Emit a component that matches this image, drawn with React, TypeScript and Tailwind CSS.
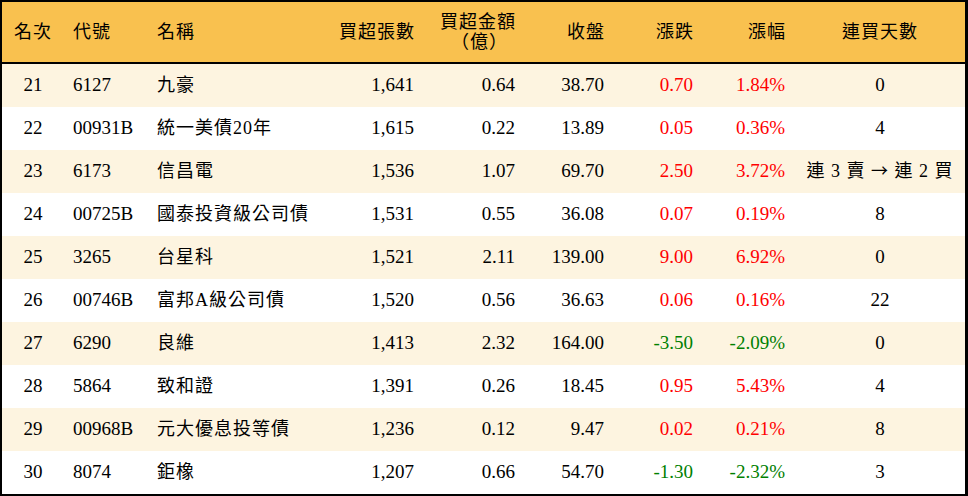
import React from 'react';

type Row = {
  rank: number;
  code: string;
  name: string;
  vol: string;
  amount: string;
  close: string;
  change: string;
  pct: string;
  days: React.ReactNode;
};

const streak = (
  <span className="text-[18px] tracking-[1px]">
    連 3 賣 <span className="font-['Noto_Sans_CJK_TC',sans-serif] text-[17px]">→</span> 連 2 買
  </span>
);

const rows: Row[] = [
  { rank: 21, code: '6127', name: '九豪', vol: '1,641', amount: '0.64', close: '38.70', change: '0.70', pct: '1.84%', days: '0' },
  { rank: 22, code: '00931B', name: '統一美債20年', vol: '1,615', amount: '0.22', close: '13.89', change: '0.05', pct: '0.36%', days: '4' },
  { rank: 23, code: '6173', name: '信昌電', vol: '1,536', amount: '1.07', close: '69.70', change: '2.50', pct: '3.72%', days: streak },
  { rank: 24, code: '00725B', name: '國泰投資級公司債', vol: '1,531', amount: '0.55', close: '36.08', change: '0.07', pct: '0.19%', days: '8' },
  { rank: 25, code: '3265', name: '台星科', vol: '1,521', amount: '2.11', close: '139.00', change: '9.00', pct: '6.92%', days: '0' },
  { rank: 26, code: '00746B', name: '富邦A級公司債', vol: '1,520', amount: '0.56', close: '36.63', change: '0.06', pct: '0.16%', days: '22' },
  { rank: 27, code: '6290', name: '良維', vol: '1,413', amount: '2.32', close: '164.00', change: '-3.50', pct: '-2.09%', days: '0' },
  { rank: 28, code: '5864', name: '致和證', vol: '1,391', amount: '0.26', close: '18.45', change: '0.95', pct: '5.43%', days: '4' },
  { rank: 29, code: '00968B', name: '元大優息投等債', vol: '1,236', amount: '0.12', close: '9.47', change: '0.02', pct: '0.21%', days: '8' },
  { rank: 30, code: '8074', name: '鉅橡', vol: '1,207', amount: '0.66', close: '54.70', change: '-1.30', pct: '-2.32%', days: '3' },
];

// column widths: 名次 / 代號 / 名稱 / 買超張數 / 金額 / 收盤 / 漲跌 / 漲幅 / 連買天數
const cols = 'grid grid-cols-[62px_84px_182px_94px_101px_89px_89px_92px_170px]';
const serif = "font-['Liberation_Serif','Noto_Sans_CJK_TC',serif]";

export default function App() {
  return (
    <div className={`w-[968px] h-[496px] bg-white text-black ${serif}`}>
      <div className="border-t-2 border-l-2 border-r-[3px] border-b-2 border-black h-full flex flex-col">
        <div className={`${cols} h-[62px] bg-[#f9c14f] border-b-2 border-black items-center text-[18px] tracking-[1px]`}>
          <div className="text-center">名次</div>
          <div className="pl-[9px]">代號</div>
          <div className="pl-[9px]">名稱</div>
          <div className="text-right pr-[9px]">買超張數</div>
          <div className="text-right pr-[9px] leading-[20px]">
            <div>買超金額</div>
            <div className="pr-[8px]">（億）</div>
          </div>
          <div className="text-right pr-[9px]">收盤</div>
          <div className="text-right pr-[9px]">漲跌</div>
          <div className="text-right pr-[9px]">漲幅</div>
          <div className="text-center">連買天數</div>
        </div>
        {rows.map((r, i) => {
          const color = r.change.startsWith('-') ? 'text-[#008000]' : 'text-[#ff0000]';
          return (
            <div
              key={r.rank}
              className={`${cols} h-[43px] items-center text-[19px] ${i % 2 === 0 ? 'bg-[#fdf4e0]' : 'bg-white'}`}
            >
              <div className="text-center">{r.rank}</div>
              <div className="pl-[9px]">{r.code}</div>
              <div className="pl-[9px] text-[18px] tracking-[1px]">{r.name}</div>
              <div className="text-right pr-[10px]">{r.vol}</div>
              <div className="text-right pr-[10px]">{r.amount}</div>
              <div className="text-right pr-[10px]">{r.close}</div>
              <div className={`text-right pr-[10px] ${color}`}>{r.change}</div>
              <div className={`text-right pr-[10px] ${color}`}>{r.pct}</div>
              <div className="text-center whitespace-nowrap">{r.days}</div>
            </div>
          );
        })}
      </div>
    </div>
  );
}
